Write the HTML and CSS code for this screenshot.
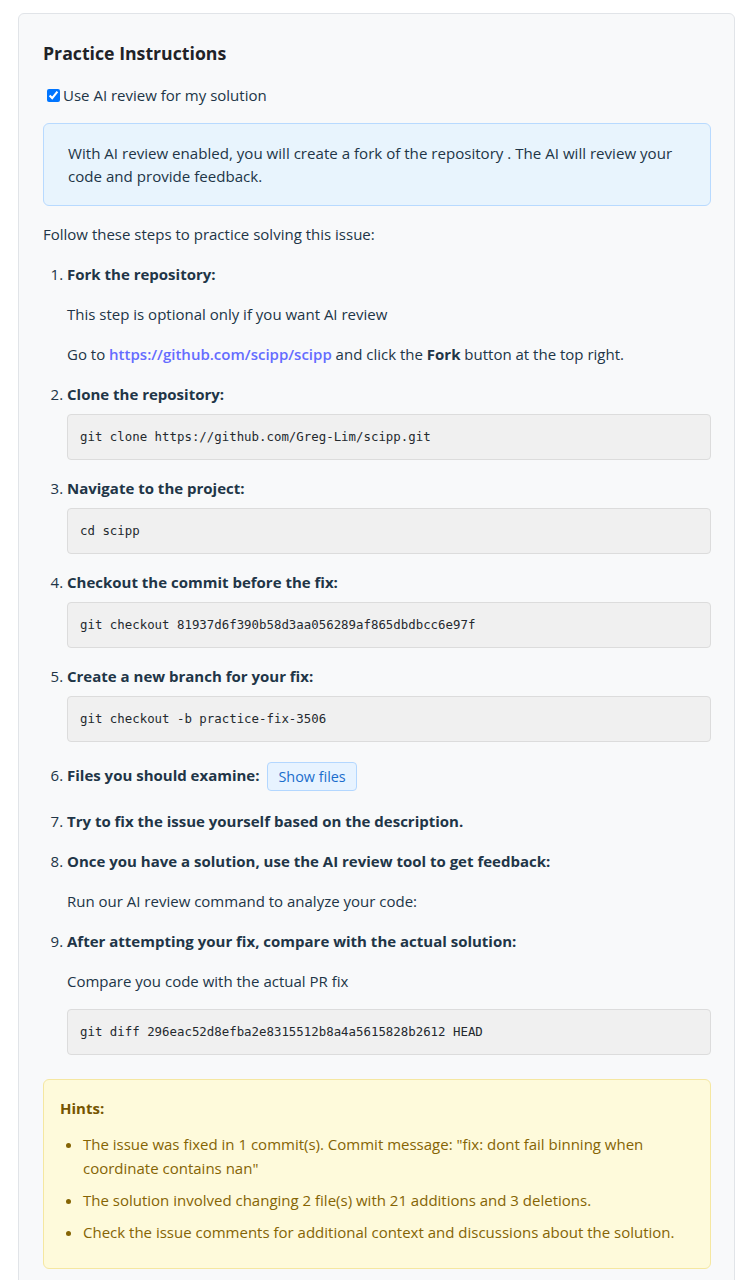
FILE: index.html
```html
<!DOCTYPE html>
<html lang="en">
<head>
<meta charset="utf-8">
<title>Practice Instructions</title>
<link rel="stylesheet" href="styles.css">
</head>
<body>
<div class="wrap">
  <section class="card">
    <h3 class="title">Practice Instructions</h3>
    <label class="ai-toggle"><input type="checkbox" checked>Use AI review for my solution</label>
    <div class="info">
      With AI review enabled, you will create a fork of the repository . The AI will review your code and provide feedback.
    </div>
    <p class="lead">Follow these steps to practice solving this issue:</p>
    <ol class="steps">
      <li>
        <strong>Fork the repository:</strong>
        <p>This step is optional only if you want AI review</p>
        <p>Go to <a href="#">https://github.com/scipp/scipp</a> and click the <strong>Fork</strong> button at the top right.</p>
      </li>
      <li>
        <strong>Clone the repository:</strong>
        <pre class="code">git clone https://github.com/Greg-Lim/scipp.git</pre>
      </li>
      <li>
        <strong>Navigate to the project:</strong>
        <pre class="code">cd scipp</pre>
      </li>
      <li>
        <strong>Checkout the commit before the fix:</strong>
        <pre class="code">git checkout 81937d6f390b58d3aa056289af865dbdbcc6e97f</pre>
      </li>
      <li>
        <strong>Create a new branch for your fix:</strong>
        <pre class="code">git checkout -b practice-fix-3506</pre>
      </li>
      <li class="files">
        <strong>Files you should examine:</strong>
        <button class="show-files" type="button">Show files</button>
      </li>
      <li>
        <strong>Try to fix the issue yourself based on the description.</strong>
      </li>
      <li>
        <strong>Once you have a solution, use the AI review tool to get feedback:</strong>
        <p>Run our AI review command to analyze your code:</p>
      </li>
      <li>
        <strong>After attempting your fix, compare with the actual solution:</strong>
        <p>Compare you code with the actual PR fix</p>
        <pre class="code">git diff 296eac52d8efba2e8315512b8a4a5615828b2612 HEAD</pre>
      </li>
    </ol>
    <div class="hints">
      <div class="hints-title">Hints:</div>
      <ul>
        <li>The issue was fixed in 1 commit(s). Commit message: "fix: dont fail binning when coordinate contains nan"</li>
        <li>The solution involved changing 2 file(s) with 21 additions and 3 deletions.</li>
        <li>Check the issue comments for additional context and discussions about the solution.</li>
      </ul>
    </div>
  </section>
</div>
</body>
</html>
```

FILE: styles.css
```css
html, body {
  background: #ffffff;
}
body {
  margin: 8px;
  font-family: "Open Sans", "Noto Sans", sans-serif;
  font-size: 15px;
  line-height: 24px;
  color: #213547;
}
.wrap {
  padding: 5px 0 0 10px;
}
.card {
  background: #f8f9fa;
  border: 1px solid #e1e4e8;
  border-radius: 6px;
  padding: 24px 23px 24px 24px;
  min-height: 1300px;
}
.title {
  margin: 0 0 15px;
  font-size: 17.7px;
  line-height: 30px;
  font-weight: 700;
  color: #1f2328;
}
.ai-toggle {
  display: block;
  line-height: 24px;
  margin-bottom: 16px;
}
.ai-toggle input {
  margin: 3px 3px 3px 4px;
  vertical-align: -1px;
}
.info {
  background: #e8f4fd;
  border: 1px solid #b8daff;
  border-radius: 6px;
  padding: 18px 24px;
  font-size: 15.1px;
  line-height: 22.5px;
  margin-bottom: 16px;
}
.lead {
  margin: 0 0 16px;
}
.steps {
  margin: 0;
  padding-left: 24px;
}
.steps > li {
  margin-bottom: 16px;
}
.steps p {
  margin: 16px 0;
}
.steps a {
  color: #646cff;
  font-weight: 600;
  text-decoration: none;
}
.code {
  margin: 8px 0 16px;
  background: #f0f0f0;
  border: 1px solid #dcdcdc;
  border-radius: 4px;
  padding: 12px;
  font-family: "DejaVu Sans Mono", "Liberation Mono", monospace;
  font-size: 12.4px;
  line-height: 20px;
  color: #24292e;
}
.files {
  line-height: 35px;
}
.show-files {
  font-family: inherit;
  font-size: 14.4px;
  line-height: 19px;
  padding: 4px 10px;
  margin-left: 4px;
  background: #e7f3ff;
  border: 1px solid #b3d7ff;
  border-radius: 4px;
  color: #1a6dcc;
  vertical-align: middle;
}
.hints {
  margin-top: 24px;
  background: #fefadb;
  border: 1px solid #f5e7a1;
  border-radius: 6px;
  padding: 16px;
  color: #856404;
}
.hints-title {
  font-weight: 700;
  color: #755500;
}
.hints ul {
  margin: 12px 0 0;
  padding-left: 23px;
}
.hints li {
  margin-bottom: 8px;
}
```
